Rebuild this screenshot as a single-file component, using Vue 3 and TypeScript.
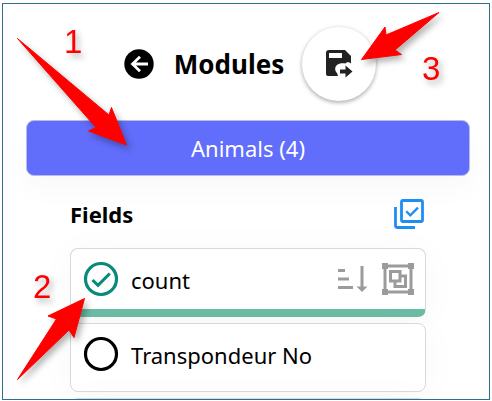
<script setup lang="ts">
import { ref } from 'vue'

interface Field {
  id: string
  label: string
  checked: boolean
}

const moduleName = 'Animals'
const moduleCount = 4

const fields = ref<Field[]>([
  { id: 'count', label: 'count', checked: true },
  { id: 'transpondeur', label: 'Transpondeur No', checked: false },
  { id: 'extra', label: '', checked: false },
])
</script>

<template>
  <main class="panel">
    <header class="header">
      <button class="back" type="button" aria-label="Back">
        <svg viewBox="0 0 30 30" width="30" height="30" aria-hidden="true">
          <circle cx="15" cy="15" r="14.7" fill="#000" />
          <path d="M24 15H8.5M16 7.7L8.500 15L16 22.3" fill="none" stroke="#fff" stroke-width="2.8" />
        </svg>
      </button>
      <h1 class="title">Modules</h1>
      <button class="save" type="button" aria-label="Save">
        <svg viewBox="0 0 30 30" width="30" height="30" aria-hidden="true">
          <path
            fill="#222"
            fill-rule="evenodd"
            d="M5 1H21L27 7V14.5C25 12.5 22.5 13 21.4 14.5C17 13.5 11.5 15 11.2 19.5C11 22 12 23 13 24L14 27H4Q2 27 2 25V4Q2 1 5 1ZM5 4V9H18V4Z"
          />
          <path fill="#222" d="M16 20.5H21.5V16.5L28.5 22.5L21.5 28.5V24.5H16Z" />
        </svg>
      </button>
    </header>

    <button class="module" type="button">{{ moduleName }} ({{ moduleCount }})</button>

    <section class="fields">
      <div class="fields-head">
        <h2 class="fields-title">Fields</h2>
        <button class="select-all" type="button" aria-label="Select all">
          <svg viewBox="0 0 30 30" width="30" height="30" fill="none" stroke="#1e8ff2" aria-hidden="true">
            <rect x="7.5" y="1.5" width="21" height="21" rx="1.5" stroke-width="2.8" />
            <path d="M1.5 8V26.5Q1.5 28.5 3.5 28.5H21" stroke-width="2.8" />
            <path d="M12.3 12.2L16.3 16.3L24 8.6" stroke-width="2.3" />
          </svg>
        </button>
      </div>

      <ul class="list">
        <li v-for="field in fields" :key="field.id" class="card" :class="{ selected: field.checked }">
          <label class="field">
            <input v-model="field.checked" class="check" type="checkbox" />
            <svg class="mark" viewBox="0 0 36 36" width="36" height="36" fill="none" aria-hidden="true">
              <circle cx="18" cy="18" r="15.5" stroke="currentColor" stroke-width="3.2" />
              <path v-if="field.checked" d="M9.5 19L15 24.3L26.8 12.5" stroke="currentColor" stroke-width="3" />
            </svg>
            <span class="label">{{ field.label }}</span>
          </label>
          <div v-if="field.checked" class="actions">
            <button type="button" aria-label="Sort">
              <svg viewBox="0 0 30 34" width="30" height="34" aria-hidden="true">
                <path
                  d="M0 8.5H7M0 17H11M0 25.5H15M24 4V25"
                  fill="none"
                  stroke="#9b9b9b"
                  stroke-width="3"
                />
                <path d="M18.5 24.5H29.5L24 30Z" fill="#9b9b9b" />
              </svg>
            </button>
            <button type="button" aria-label="Group">
              <svg viewBox="0 0 34 34" width="34" height="34" fill="none" stroke="#9b9b9b" aria-hidden="true">
                <rect x="4" y="4" width="26" height="26" stroke-width="3" />
                <path
                  d="M1 1H7V7H1ZM27 1H33V7H27ZM1 27H7V33H1ZM27 27H33V33H27Z"
                  fill="#9b9b9b"
                  stroke="none"
                />
                <rect x="9.5" y="9.500" width="9.500" height="9.500" stroke-width="3" />
                <path d="M20 14H24.500V24.500H14V20" stroke-width="3" />
              </svg>
            </button>
          </div>
        </li>
      </ul>
    </section>

    <svg class="notes" viewBox="0 0 492 401" width="492" height="401" aria-hidden="true">
      <g fill="#f00" stroke="#f00" stroke-linejoin="round">
        <path d="M17.500 38.500L109 115L111.500 107.500L126.500 145L88.500 131L96 127.500Z" />
        <path d="M17.500 379.500L56.500 319L48 316L84.500 298.500L74 337.500L69 330Z" />
        <path d="M439 12.500L386 35L385 27L361.500 59.500L401.500 54.500L395 50Z" />
      </g>
      <g class="digits">
        <text x="64" y="53">1</text>
        <text x="33" y="298">2</text>
        <text x="422" y="80">3</text>
      </g>
    </svg>
  </main>
</template>

<style>
body {
  margin: 0;
  background: #fff;
}
</style>

<style scoped>
.panel {
  box-sizing: border-box;
  height: calc(100vh - 4px);
  margin: 3px 2px 1px;
  padding: 23px 19px 0 23px;
  overflow: hidden;
  border: 1px solid #2c7091;
  background: #fff;
  color: #000;
  font-family: "Segoe UI", "Noto Sans", "Open Sans", sans-serif;
}

button {
  padding: 0;
  border: 0;
  background: none;
  font: inherit;
  cursor: pointer;
}

svg {
  display: block;
}

h1,
h2,
ul {
  margin: 0;
  padding: 0;
}

.header {
  display: flex;
  align-items: center;
  justify-content: center;
  height: 74px;
  padding-left: 4px;
}

.title {
  margin: 0 18px 0 20px;
  font-size: 26px;
  line-height: 36px;
}

.save {
  display: grid;
  place-items: center;
  width: 74px;
  height: 74px;
  border-radius: 50%;
  background: #fff;
  box-shadow: 0 2px 4px rgba(0, 0, 0, 0.28), 0 0 5px rgba(0, 0, 0, 0.08);
}

.module {
  display: block;
  width: 100%;
  height: 56px;
  margin-top: 19px;
  border: 1px solid #b9bbe0;
  border-radius: 8px;
  background: #616dfb;
  box-shadow: 0 12px 30px rgba(0, 0, 0, 0.03);
  color: #fff;
  font-size: 22px;
  line-height: 30px;
}

.fields {
  padding: 23px 44px 0;
}

.fields-head {
  display: flex;
  align-items: center;
  justify-content: space-between;
  height: 30px;
  padding-right: 2px;
}

.fields-title {
  font-size: 22px;
  line-height: 30px;
}

.list {
  display: flex;
  flex-direction: column;
  gap: 6px;
  margin-top: 19px;
  list-style: none;
}

.card {
  box-sizing: border-box;
  display: flex;
  align-items: center;
  justify-content: space-between;
  height: 69px;
  padding: 0 10px 8px 12px;
  border: 1px solid #d9d9d9;
  border-radius: 8px;
  background: #fff;
  box-shadow: 0 4px 40px rgba(0, 0, 0, 0.03);
}

.card.selected {
  padding-bottom: 0;
  border-bottom: 8px solid #6bbca4;
}

.field {
  position: relative;
  display: flex;
  align-items: center;
  gap: 12px;
  font-size: 22px;
  line-height: 32px;
}

.label {
  padding-top: 2px;
}

.check {
  position: absolute;
  width: 36px;
  height: 36px;
  margin: 0;
  opacity: 0;
}

.mark {
  color: #000;
}

.selected .mark {
  color: #07897b;
}

.actions {
  display: flex;
  align-items: center;
  gap: 13px;
}

.notes {
  position: absolute;
  top: 0;
  left: 0;
  filter: drop-shadow(3px 4px 3px rgba(0, 0, 0, 0.3));
  pointer-events: none;
}

.digits {
  fill: #f00;
  font-family: "Liberation Sans", Arial, sans-serif;
  font-size: 33px;
}
</style>
